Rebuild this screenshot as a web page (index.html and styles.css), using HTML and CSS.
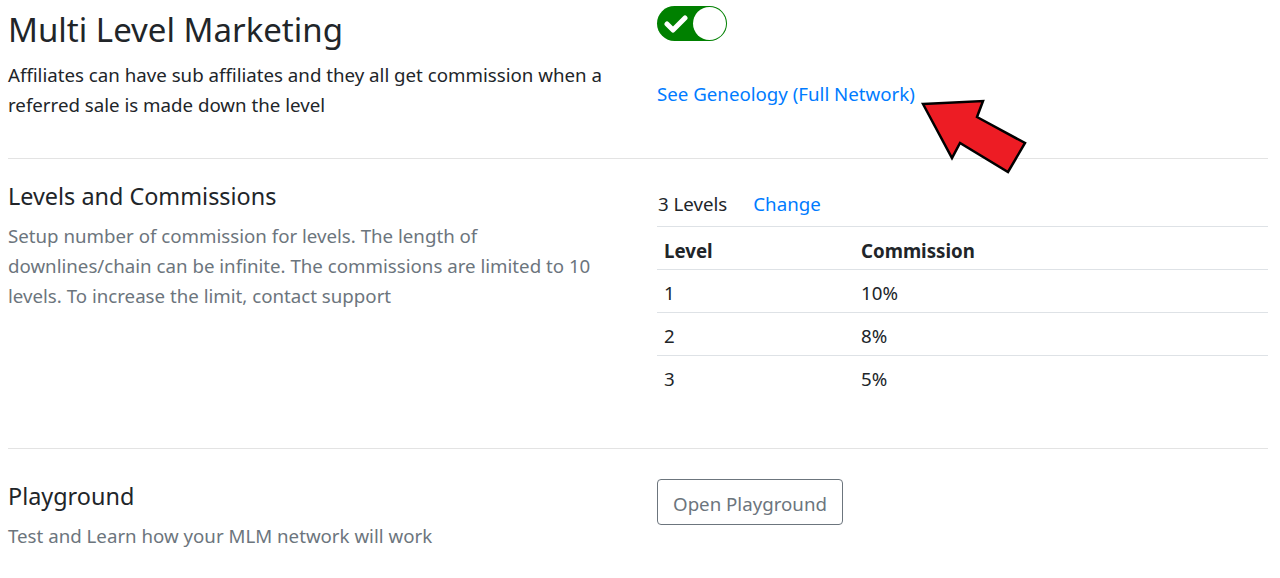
FILE: index.html
```html
<!DOCTYPE html>
<html lang="en">
<head>
<meta charset="utf-8">
<title>Multi Level Marketing</title>
<link rel="stylesheet" href="styles.css">
</head>
<body>
<div class="page">
  <section class="row row-mlm">
    <div class="col-left">
      <h1 class="title-main">Multi Level Marketing</h1>
      <p class="lead-text">Affiliates can have sub affiliates and they all get commission when a referred sale is made down the level</p>
    </div>
    <div class="col-right">
      <div class="toggle">
        <svg class="toggle-check" width="24" height="20" viewBox="0 0 24 20"><path d="M3 10 L9 16 L21 4" fill="none" stroke="#fff" stroke-width="5" stroke-linecap="round" stroke-linejoin="round"/></svg>
        <span class="toggle-knob"></span>
      </div>
      <a class="link geneology" href="#">See Geneology (Full Network)</a>
      <svg class="arrow" width="110" height="76" viewBox="0 0 110 76">
        <polygon points="4,5 64,2 58,18 106,44 89,73 41,44 33,59" fill="#ed1c24" stroke="#000" stroke-width="2.5" stroke-linejoin="miter"/>
      </svg>
    </div>
  </section>
  <hr class="sep">
  <section class="row row-levels">
    <div class="col-left">
      <h2 class="title-sub">Levels and Commissions</h2>
      <p class="muted">Setup number of commission for levels. The length of downlines/chain can be infinite. The commissions are limited to 10 levels. To increase the limit, contact support</p>
    </div>
    <div class="col-right">
      <div class="levels-bar">
        <span>3 Levels</span>
        <a class="link" href="#">Change</a>
      </div>
      <table class="levels-table">
        <thead>
          <tr><th class="c-level">Level</th><th>Commission</th></tr>
        </thead>
        <tbody>
          <tr><td>1</td><td>10%</td></tr>
          <tr><td>2</td><td>8%</td></tr>
          <tr><td>3</td><td>5%</td></tr>
        </tbody>
      </table>
    </div>
  </section>
  <hr class="sep">
  <section class="row row-play">
    <div class="col-left">
      <h2 class="title-sub">Playground</h2>
      <p class="muted">Test and Learn how your MLM network will work</p>
    </div>
    <div class="col-right">
      <button class="btn-outline" type="button">Open Playground</button>
    </div>
  </section>
</div>
</body>
</html>
```

FILE: styles.css
```css
* { box-sizing: border-box; }
html, body { margin: 0; padding: 0; background: #fff; }
body {
  font-family: "Noto Sans", "Open Sans", sans-serif;
  color: #212529;
  font-size: 18.7px;
  line-height: 30px;
}
.page { padding: 0 12px 0 8px; }
.row {
  display: grid;
  grid-template-columns: 612px 1fr;
  column-gap: 37px;
}
.col-right { position: relative; }

.title-main {
  margin: 8px 0 0;
  font-size: 33px;
  line-height: 44px;
  font-weight: 400;
}
.lead-text {
  margin: 8px 0 0;
  line-height: 29.5px;
}
.row-mlm { height: 158px; }

.toggle {
  margin-top: 6px;
  width: 70px;
  height: 35px;
  border-radius: 18px;
  background: #008000;
  position: relative;
}
.toggle-check { position: absolute; left: 7px; top: 8px; }
.toggle-knob {
  position: absolute;
  right: 1px;
  top: 1px;
  width: 33px;
  height: 33px;
  border-radius: 50%;
  background: #fff;
}
.link { color: #007bff; text-decoration: none; }
.geneology { display: inline-block; margin-top: 38px; }
.arrow { position: absolute; left: 262px; top: 99px; }

.sep { margin: 0; border: 0; border-top: 1px solid #e3e3e3; }

.title-sub {
  margin: 20px 0 0;
  font-size: 23.4px;
  line-height: 34px;
  font-weight: 400;
}
.muted { margin: 8px 0 0; color: #6c757d; }
.row-levels { height: 289px; }

.levels-bar { margin-top: 30px; display: flex; gap: 26px; height: 37px; padding-left: 1px; }
.levels-table {
  width: 100%;
  border-collapse: collapse;
}
.levels-table th, .levels-table td {
  text-align: left;
  padding: 8px 7px 4px;
  border-top: 1px solid #dee2e6;
  vertical-align: middle;
}
.levels-table th { font-weight: 700; padding-top: 9px; padding-bottom: 3px; }
.c-level { width: 197px; }

.row-play .title-sub { margin-top: 30px; }
.btn-outline {
  margin-top: 30px;
  height: 46px;
  width: 186px;
  padding: 2px 0 0;
  background: #fff;
  border: 1px solid #6c757d;
  border-radius: 4px;
  color: #6c757d;
  font-family: inherit;
  font-size: 18.7px;
}
```
